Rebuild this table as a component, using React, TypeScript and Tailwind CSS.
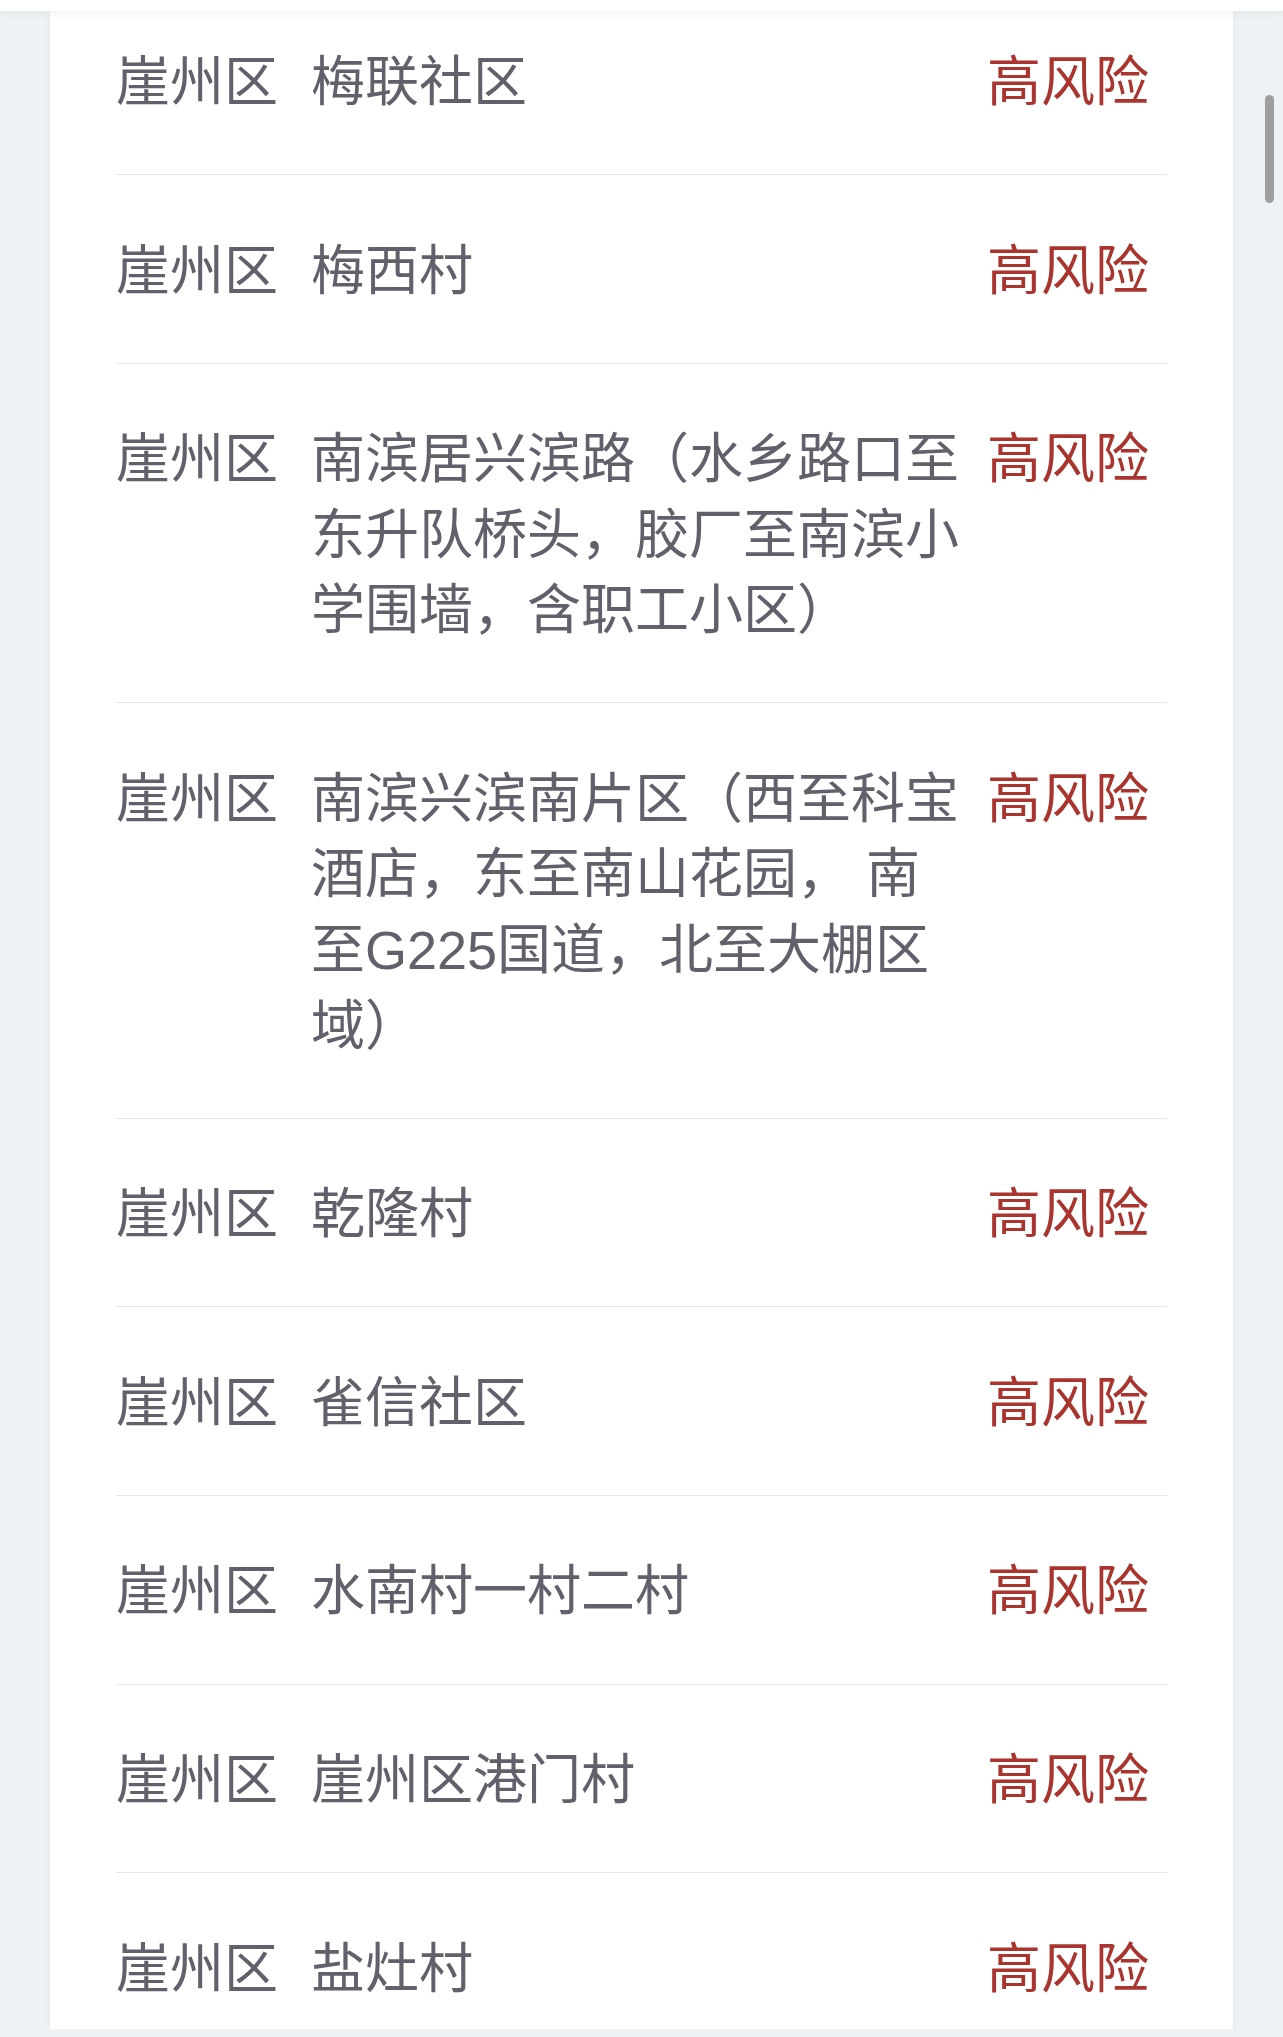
const rows: { district: string; name: string }[] = [
  { district: '崖州区', name: '梅联社区' },
  { district: '崖州区', name: '梅西村' },
  { district: '崖州区', name: '南滨居兴滨路（水乡路口至东升队桥头，胶厂至南滨小学围墙，含职工小区）' },
  { district: '崖州区', name: '南滨兴滨南片区（西至科宝酒店，东至南山花园， 南至G225国道，北至大棚区域）' },
  { district: '崖州区', name: '乾隆村' },
  { district: '崖州区', name: '雀信社区' },
  { district: '崖州区', name: '水南村一村二村' },
  { district: '崖州区', name: '崖州区港门村' },
  { district: '崖州区', name: '盐灶村' },
]

export default function App() {
  return (
    <div
      className="relative h-[2037px] overflow-hidden bg-[#eef2f5]"
      style={{ fontFamily: '"Liberation Sans", "Noto Sans CJK SC", sans-serif' }}
    >
      {/* fixed header edge */}
      <div className="absolute inset-x-0 top-0 z-10 h-[11px] bg-white shadow-[0_2px_10px_rgba(0,0,0,0.06)]" />

      <div className="mx-[50px] -mt-[13.6px] bg-white px-[66px] shadow-[0_0_8px_rgba(0,0,0,0.04)]">
        <ul>
          {rows.map((row, i) => (
            <li
              key={i}
              className="flex border-b border-[#e6e6e6] pt-[58.5px] pb-[53.5px] text-[54px] leading-[1.4] text-[#60616b]"
            >
              <span className="w-[162px] shrink-0 whitespace-nowrap">{row.district}</span>
              <span className="ml-[33px] w-[652px] shrink-0">{row.name}</span>
              <span className="ml-auto w-[180px] shrink-0 whitespace-nowrap text-[#a9352e]">高风险</span>
            </li>
          ))}
        </ul>
      </div>

      {/* bottom edge */}
      <div className="absolute inset-x-0 bottom-0 z-10 h-[8px] bg-[#eef2f5]" />

      {/* scrollbar */}
      <div className="absolute right-[9px] top-[95px] z-20 h-[108px] w-[9px] rounded-full bg-[#9e9e9e]" />
    </div>
  )
}
